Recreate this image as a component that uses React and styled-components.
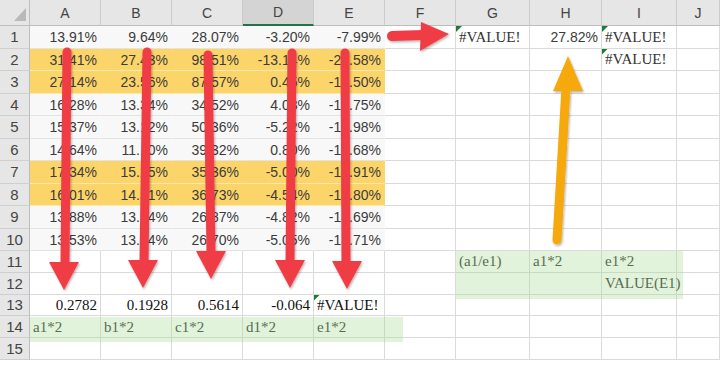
import React from 'react'
import styled, { createGlobalStyle, css } from 'styled-components'

const GlobalStyle = createGlobalStyle`
  body {
    margin: 0;
    background: #fff;
  }
`

const COLS = ['A', 'B', 'C', 'D', 'E', 'F', 'G', 'H', 'I', 'J']
const GOLD_ROWS = [2, 3, 7, 8]

const PCT = [
	['13.91%', '9.64%', '28.07%', '-3.20%', '-7.99%'],
	['31.41%', '27.43%', '98.51%', '-13.14%', '-21.58%'],
	['27.14%', '23.56%', '87.57%', '0.45%', '-19.50%'],
	['16.28%', '13.34%', '34.52%', '4.03%', '-17.75%'],
	['15.37%', '13.12%', '50.36%', '-5.22%', '-12.98%'],
	['14.64%', '11.10%', '39.32%', '0.80%', '-12.68%'],
	['17.34%', '15.25%', '35.36%', '-5.00%', '-14.91%'],
	['16.01%', '14.31%', '36.73%', '-4.54%', '-14.80%'],
	['13.88%', '13.34%', '26.87%', '-4.82%', '-14.69%'],
	['13.53%', '13.34%', '26.70%', '-5.05%', '-14.71%']
]

// loose cells outside the table
const EXTRA = {
	G1: { t: '#VALUE!', serif: true, left: true, flag: true },
	H1: { t: '27.82%' },
	I1: { t: '#VALUE!', serif: true, left: true, flag: true },
	I2: { t: '#VALUE!', serif: true, left: true, flag: true },
	G11: { t: '(a1/e1)', serif: true, left: true },
	H11: { t: 'a1*2', serif: true, left: true },
	I11: { t: 'e1*2', serif: true, left: true },
	I12: { t: 'VALUE(E1)', serif: true, left: true },
	A13: { t: '0.2782', serif: true, dark: true },
	B13: { t: '0.1928', serif: true, dark: true },
	C13: { t: '0.5614', serif: true, dark: true },
	D13: { t: '-0.064', serif: true, dark: true },
	E13: { t: '#VALUE!', serif: true, left: true, flag: true, dark: true },
	A14: { t: 'a1*2', serif: true, left: true },
	B14: { t: 'b1*2', serif: true, left: true },
	C14: { t: 'c1*2', serif: true, left: true },
	D14: { t: 'd1*2', serif: true, left: true },
	E14: { t: 'e1*2', serif: true, left: true }
}

const Sheet = styled.div`
  position: relative;
  width: 720px;
  height: 365px;
  overflow: hidden;
  display: grid;
  grid-template-columns: 30px 71px 71px 71px 71px 71px 71px 74px 72px 75px 43px;
  grid-template-rows: 26px repeat(10, 22.5px) repeat(5, 21.8px);
  align-content: start;
  background: #fff;
`
const Corner = styled.div`
  position: relative;
  box-sizing: border-box;
  background: #e6e6e6;
  border-right: 1px solid #bdbdbd;
  border-bottom: 1px solid #bdbdbd;

  &::after {
    content: '';
    position: absolute;
    right: 3px;
    bottom: 4px;
    width: 12px;
    height: 13px;
    background: #b9b9b9;
    clip-path: polygon(100% 0, 100% 100%, 0 100%);
  }
`
const ColHead = styled.div`
  box-sizing: border-box;
  display: flex;
  align-items: center;
  justify-content: center;
  background: ${({ $active }) => ($active ? '#d4d4d4' : '#e6e6e6')};
  border-right: 1px solid #cbcbcb;
  border-bottom: ${({ $active }) => ($active ? '2px solid #217346' : '1px solid #bdbdbd')};
  font: 14px "Liberation Sans", Arial, sans-serif;
  color: #444;
`
const RowHead = styled.div`
  box-sizing: border-box;
  display: flex;
  align-items: center;
  justify-content: center;
  background: #e6e6e6;
  border-right: 1px solid #bdbdbd;
  border-bottom: 1px solid #cfcfcf;
  font: 15px "Liberation Sans", Arial, sans-serif;
  color: #444;
`
const Cell = styled.div`
  box-sizing: border-box;
  display: flex;
  align-items: center;
  justify-content: ${({ $left }) => ($left ? 'flex-start' : 'flex-end')};
  padding: 1px 3px 0;
  background: ${({ $fill }) => $fill || '#fff'};
  border-right: 1px solid ${({ $fill }) => $fill || '#dadada'};
  border-bottom: 1px solid ${({ $rule }) => $rule || '#dadada'};
  white-space: nowrap;
  font-family: ${({ $serif }) => ($serif ? '"Liberation Serif", "Times New Roman", serif' : '"Liberation Sans", Arial, sans-serif')};
  font-size: ${({ $serif }) => ($serif ? '15px' : '14px')};
  color: ${({ $serif, $dark }) => ($dark ? '#111' : $serif ? '#333' : '#3b3b3b')};

  ${({ $text }) => $text && css`
    position: relative;
  `}

  ${({ $flag }) => $flag && css`
    &::before {
      content: '';
      position: absolute;
      left: 0;
      top: 0;
      width: 6px;
      height: 6px;
      background: #1f7a35;
      clip-path: polygon(0 0, 100% 0, 0 100%);
    }
  `}
`
const Highlight = styled.div`
  position: absolute;
  left: ${({ $x }) => $x}px;
  top: ${({ $y }) => $y}px;
  width: ${({ $w }) => $w}px;
  height: ${({ $h }) => $h}px;
  background: rgba(165, 220, 145, 0.33);
  pointer-events: none;
`
const Overlay = styled.svg`
  position: absolute;
  left: 0;
  top: 0;
  pointer-events: none;
`

// red arrows in the table, top point -> head
const DOWN = [
	{ x1: 67, y1: 52, x2: 65, y2: 262, tip: 64, ty: 290 },
	{ x1: 147, y1: 52, x2: 144, y2: 262, tip: 143, ty: 288 },
	{ x1: 208, y1: 55, x2: 211, y2: 252, tip: 211, ty: 279 },
	{ x1: 292, y1: 53, x2: 290, y2: 262, tip: 290, ty: 288 },
	{ x1: 345, y1: 53, x2: 346, y2: 262, tip: 347, ty: 289 }
]

function Arrows () {
	const red = '#f03d45'
	return (
		<Overlay width="720" height="365" viewBox="0 0 720 365">
			<defs>
				<filter id="sh" x="-20%" y="-20%" width="140%" height="140%">
					<feDropShadow dx="1" dy="1.5" stdDeviation="1.2" floodColor="#000" floodOpacity="0.3" />
				</filter>
			</defs>
			<g filter="url(#sh)">
				{DOWN.map((a, i) => (
					<g key={i}>
						<line x1={a.x1} y1={a.y1} x2={a.x2} y2={a.y2} stroke={red} strokeWidth="9" strokeLinecap="round" />
						<polygon points={`${a.tip - 15},${a.ty - 28} ${a.tip + 15},${a.ty - 28} ${a.tip},${a.ty}`} fill={red} />
					</g>
				))}
				<line x1="392" y1="36" x2="424" y2="35" stroke={red} strokeWidth="10" strokeLinecap="round" />
				<polygon points="421,22 420,51 449,34" fill={red} />
				<line x1="557" y1="240" x2="566" y2="88" stroke="#f6a908" strokeWidth="9" strokeLinecap="round" />
				<polygon points="553,91 583,91 568,56" fill="#f6a908" />
			</g>
		</Overlay>
	)
}

function cellProps (col, row) {
	const ci = COLS.indexOf(col)
	if (row <= 10 && ci < 5) {
		const gold = GOLD_ROWS.includes(row)
		return {
			t: PCT[row - 1][ci],
			fill: gold ? '#fcd56a' : '#f8f8f8',
			rule: gold ? '#fde9ae' : '#e3e3e3'
		}
	}
	return EXTRA[col + row] || {}
}

export default function App () {
	const rows = Array.from({ length: 15 }, (_, i) => i + 1)
	return (
		<>
			<GlobalStyle />
			<Sheet>
				<Corner />
				{COLS.map((c) => (
					<ColHead key={c} $active={c === 'D'}>{c}</ColHead>
				))}
				{rows.map((r) => (
					<React.Fragment key={r}>
						<RowHead>{r}</RowHead>
						{COLS.map((c) => {
							const p = cellProps(c, r)
							return (
								<Cell
									key={c}
									$fill={p.fill}
									$rule={p.rule}
									$serif={p.serif}
									$left={p.left}
									$dark={p.dark}
									$flag={p.flag}
									$text={!!p.t}
								>
									{p.t}
								</Cell>
							)
						})}
					</React.Fragment>
				))}
				<Highlight $x={30} $y={317} $w={373} $h={25} />
				<Highlight $x={456} $y={251} $w={227} $h={48} />
				<Arrows />
			</Sheet>
		</>
	)
}
